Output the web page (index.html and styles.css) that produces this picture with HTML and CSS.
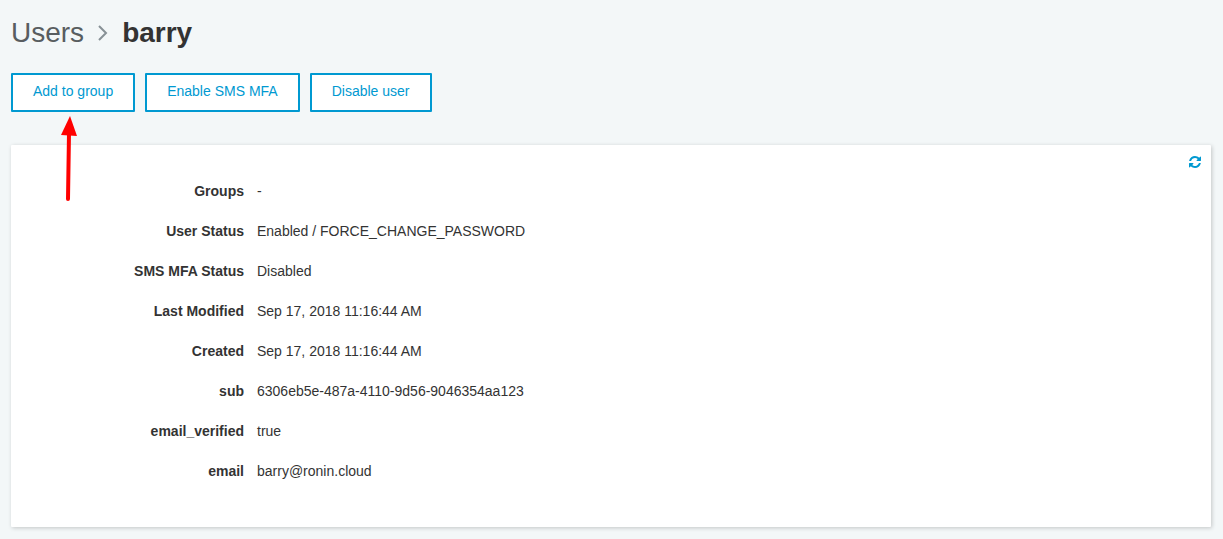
FILE: index.html
```html
<!DOCTYPE html>
<html lang="en">
<head>
    <meta charset="UTF-8">
    <meta name="viewport" content="width=device-width, initial-scale=1.0">
    <title>Users - barry</title>
    <link rel="stylesheet" href="styles.css">
</head>
<body>
    <main class="page">
        <h1 class="breadcrumb">
            <a href="#users">Users</a>
            <svg class="chevron" viewBox="0 0 10 16" aria-hidden="true">
                <path d="M1 1l7 7-7 7" fill="none" stroke="#879196" stroke-width="2"/>
            </svg>
            <span class="current">barry</span>
        </h1>

        <div class="actions">
            <button type="button">Add to group</button>
            <button type="button">Enable SMS MFA</button>
            <button type="button">Disable user</button>
            <svg class="pointer" viewBox="0 0 18 86" aria-hidden="true">
                <path d="M9 17L8 83" fill="none" stroke="#f00" stroke-width="4" stroke-linecap="round"/>
                <path d="M10 0l7 20-16-1z" fill="#f00"/>
            </svg>
        </div>

        <section class="panel">
            <button type="button" class="refresh" aria-label="Refresh">
                <svg viewBox="0 0 1536 1536" aria-hidden="true">
                    <path fill="currentColor" d="M1511 928q0 5-1 7-64 268-268 434.500t-478 166.500q-146 0-282.500-55t-243.500-157l-129 129q-19 19-45 19t-45-19-19-45v-448q0-26 19-45t45-19h448q26 0 45 19t19 45-19 45l-137 137q71 66 161 102t187 36q134 0 250-65t186-179q11-17 53-117 8-23 30-23h192q13 0 22.500 9.500t9.500 22.500zm25-800v448q0 26-19 45t-45 19h-448q-26 0-45-19t-19-45 19-45l138-138q-148-137-349-137-134 0-250 65t-186 179q-11 17-53 117-8 23-30 23h-199q-13 0-22.500-9.500t-9.500-22.500v-7q65-268 270-434.500t480-166.500q146 0 284 55.500t245 156.500l130-129q19-19 45-19t45 19 19 45z"/>
                </svg>
            </button>
            <dl class="details">
                <dt>Groups</dt>
                <dd>-</dd>
                <dt>User Status</dt>
                <dd>Enabled / FORCE_CHANGE_PASSWORD</dd>
                <dt>SMS MFA Status</dt>
                <dd>Disabled</dd>
                <dt>Last Modified</dt>
                <dd>Sep 17, 2018 11:16:44 AM</dd>
                <dt>Created</dt>
                <dd>Sep 17, 2018 11:16:44 AM</dd>
                <dt>sub</dt>
                <dd>6306eb5e-487a-4110-9d56-9046354aa123</dd>
                <dt>email_verified</dt>
                <dd>true</dd>
                <dt>email</dt>
                <dd>barry@ronin.cloud</dd>
            </dl>
        </section>
    </main>
</body>
</html>
```

FILE: styles.css
```css
* {
    box-sizing: border-box;
}

body {
    margin: 0;
    font-family: "Liberation Sans", Arial, sans-serif;
    font-size: 14px;
    line-height: 20px;
    color: #333;
    background-color: #f3f7f8;
}

.page {
    padding: 17px 12px 12px 11px;
}

.breadcrumb {
    display: flex;
    align-items: center;
    margin: 0 0 24px;
    font-size: 28px;
    font-weight: normal;
    line-height: 32px;
}

.breadcrumb a {
    color: #585d60;
    text-decoration: none;
}

.breadcrumb .chevron {
    width: 10px;
    height: 16px;
    margin: 0 14px;
}

.breadcrumb .current {
    font-weight: bold;
}

.actions {
    position: relative;
    display: flex;
    gap: 10px;
    margin-bottom: 33px;
}

.actions button {
    padding: 6px 20px 9px;
    border: 2px solid #0099d1;
    border-radius: 1px;
    background-color: #fff;
    color: #0099d1;
    font-family: inherit;
    font-size: 14px;
    line-height: 20px;
    cursor: pointer;
}

.actions button:hover {
    background-color: #f3f7f8;
}

/* Arrow lies over the panel below */
.pointer {
    position: absolute;
    top: 43px;
    left: 49px;
    width: 18px;
    height: 86px;
    z-index: 1;
}

.panel {
    position: relative;
    padding: 26px 20px 36px 0;
    border-radius: 1px;
    background-color: #fff;
    box-shadow: 1px 1px 4px rgba(0, 0, 0, 0.2);
}

.refresh {
    position: absolute;
    top: 11px;
    right: 10px;
    padding: 0;
    border: none;
    background: none;
    color: #0099d1;
    cursor: pointer;
}

.refresh svg {
    display: block;
    width: 12px;
    height: 12px;
}

.details {
    display: grid;
    grid-template-columns: 233px 1fr;
    column-gap: 13px;
    margin: 0;
    line-height: 40px;
}

.details dt {
    font-weight: bold;
    text-align: right;
}

.details dd {
    margin: 0;
}
```
